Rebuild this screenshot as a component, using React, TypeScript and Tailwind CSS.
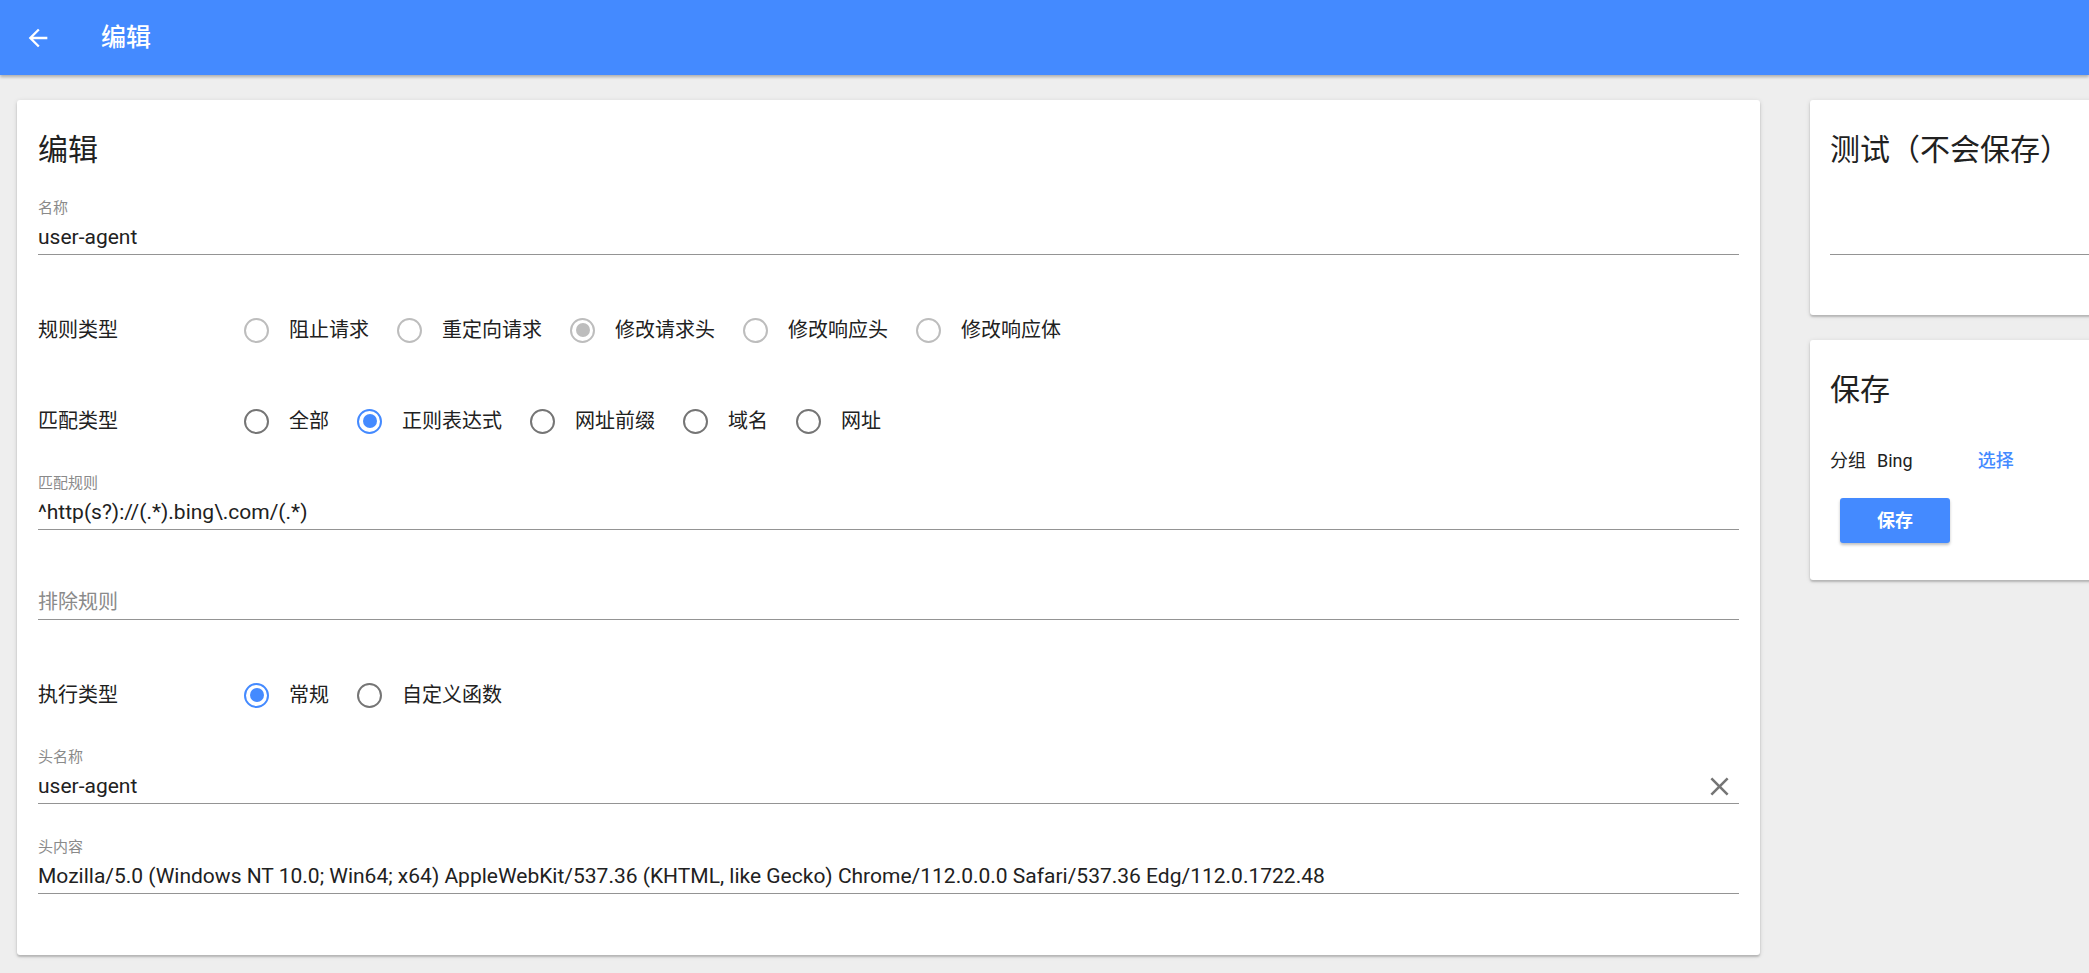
import React from "react";

const FONT = "font-['Roboto','Noto_Sans_CJK_SC',sans-serif]";

type RadioProps = { label: string; checked?: boolean; disabled?: boolean };

const Radio: React.FC<RadioProps> = ({ label, checked, disabled }) => {
  const ring = disabled
    ? "border-[#bdbdbd]"
    : checked
    ? "border-[#448aff]"
    : "border-[#757575]";
  const dot = disabled ? "bg-[#bdbdbd]" : "bg-[#448aff]";
  return (
    <div className="mr-[28px] flex items-center">
      <div
        className={`flex h-[25px] w-[25px] items-center justify-center rounded-full border-[2.5px] ${ring}`}
      >
        {checked && <div className={`h-[14px] w-[14px] rounded-full ${dot}`} />}
      </div>
      <span className="ml-[20px] text-[20px] leading-none text-[#212121]">{label}</span>
    </div>
  );
};

type RadioRowProps = {
  title: string;
  items: string[];
  selected: number;
  disabled?: boolean;
  className?: string;
};

const RadioRow: React.FC<RadioRowProps> = ({ title, items, selected, disabled, className }) => (
  <div className={`flex h-12 items-center ${className ?? ""}`}>
    <div className="w-[206px] text-[20px] text-[#212121]">{title}</div>
    {items.map((it, i) => (
      <Radio key={it} label={it} checked={i === selected} disabled={disabled} />
    ))}
  </div>
);

type FieldProps = {
  label?: string;
  value?: string;
  placeholder?: string;
  clear?: boolean;
  className?: string;
};

const Field: React.FC<FieldProps> = ({ label, value, placeholder, clear, className }) => (
  <div className={className}>
    <div className="h-5 text-[15px] leading-5 text-[#8a8a8a]">{label}</div>
    <div className="mt-1 flex h-[30px] items-center">
      {value ? (
        <span className="flex-1 truncate text-[21px] leading-[30px] text-[#212121]">{value}</span>
      ) : (
        <span className="flex-1 text-[20px] leading-[30px] text-[#8a8a8a]">{placeholder}</span>
      )}
      {clear && (
        <svg viewBox="0 0 24 24" className="mr-[4px] h-[31px] w-[31px] fill-[#757575]">
          <path d="M19 6.41L17.59 5 12 10.59 6.41 5 5 6.41 10.59 12 5 17.59 6.41 19 12 13.41 17.59 19 19 17.59 13.41 12z" />
        </svg>
      )}
    </div>
    <div className="mt-[2px] border-b border-[#949494]" />
  </div>
);

const card = "rounded-[3px] bg-white shadow-[0_2px_2px_rgba(0,0,0,0.18),0_1px_5px_rgba(0,0,0,0.12)]";

export default function App() {
  return (
    <div className={`min-h-screen w-full overflow-hidden bg-[#eeeeee] ${FONT}`}>
      {/* toolbar */}
      <header className="relative z-10 flex h-[75px] items-center bg-[#448aff] shadow-[0_2px_3px_rgba(0,0,0,0.28)]">
        <svg viewBox="0 0 24 24" className="ml-[24px] h-[28px] w-[28px] fill-white">
          <path d="M20 11H7.83l5.59-5.59L12 4l-8 8 8 8 1.41-1.41L7.83 13H20v-2z" />
        </svg>
        <h1 className="ml-[49px] text-[25px] font-medium text-white">编辑</h1>
      </header>

      <main className="flex gap-[50px] pl-[17px] pt-[25px]">
        {/* main form */}
        <section className={`w-[1743px] shrink-0 px-[21px] pb-[61px] pt-[30px] ${card}`}>
          <h2 className="h-10 text-[30px] leading-10 text-[#212121]">编辑</h2>

          <Field className="mt-[28px]" label="名称" value="user-agent" />

          <RadioRow
            className="mt-[51px]"
            title="规则类型"
            items={["阻止请求", "重定向请求", "修改请求头", "修改响应头", "修改响应体"]}
            selected={2}
            disabled
          />
          <RadioRow
            className="mt-[43px]"
            title="匹配类型"
            items={["全部", "正则表达式", "网址前缀", "域名", "网址"]}
            selected={1}
          />

          <Field className="mt-[28px]" label="匹配规则" value="^http(s?)://(.*).bing\.com/(.*)" />
          <Field className="mt-[33px]" placeholder="排除规则" />

          <RadioRow className="mt-[51px]" title="执行类型" items={["常规", "自定义函数"]} selected={0} />

          <Field className="mt-[28px]" label="头名称" value="user-agent" clear />
          <Field
            className="mt-[33px]"
            label="头内容"
            value="Mozilla/5.0 (Windows NT 10.0; Win64; x64) AppleWebKit/537.36 (KHTML, like Gecko) Chrome/112.0.0.0 Safari/537.36 Edg/112.0.1722.48"
          />
        </section>

        {/* side column */}
        <aside className="flex w-[420px] shrink-0 flex-col gap-[25px]">
          <div className={`px-[20px] pb-[60px] pt-[30px] ${card}`}>
            <h2 className="h-10 text-[30px] leading-10 text-[#212121]">测试（不会保存）</h2>
            <div className="mt-[84px] border-b border-[#949494]" />
          </div>

          <div className={`px-[20px] pb-[37px] pt-[30px] ${card}`}>
            <h2 className="h-10 text-[30px] leading-10 text-[#212121]">保存</h2>
            <div className="mt-[35px] flex h-[30px] items-center text-[18px] text-[#212121]">
              <span>分组</span>
              <span className="ml-[11px]">Bing</span>
              <span className="ml-[65px] font-medium text-[#448aff]">选择</span>
            </div>
            <button className="ml-[10px] mt-[23px] h-[45px] w-[110px] rounded-[3px] bg-[#448aff] text-[18px] font-bold text-white shadow-[0_2px_3px_rgba(0,0,0,0.25)]">
              保存
            </button>
          </div>
        </aside>
      </main>
    </div>
  );
}
